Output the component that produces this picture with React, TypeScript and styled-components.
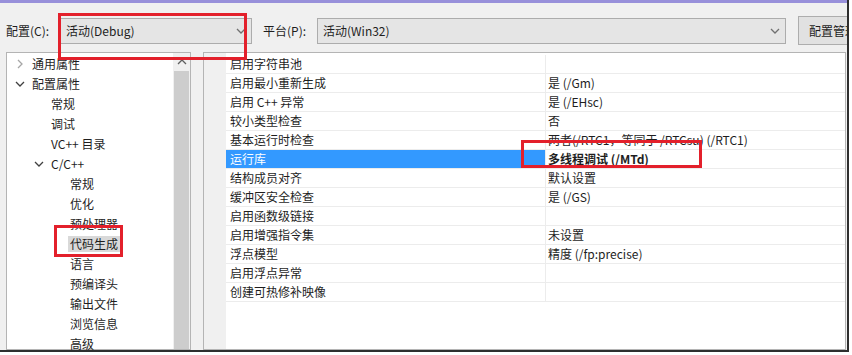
import styled, { createGlobalStyle } from "styled-components";

const GlobalStyle = createGlobalStyle`
  html, body {
    margin: 0;
    padding: 0;
    background: #fff;
  }
  body {
    font-family: "Noto Sans CJK SC", sans-serif;
    font-size: 12px;
    color: #1e1e1e;
  }
`;

type TreeItem = { label: string; level: number; arrow?: "open" | "closed"; selected?: boolean };

const treeItems: TreeItem[] = [
  { label: "通用属性", level: 0, arrow: "closed" },
  { label: "配置属性", level: 0, arrow: "open" },
  { label: "常规", level: 1 },
  { label: "调试", level: 1 },
  { label: "VC++ 目录", level: 1 },
  { label: "C/C++", level: 1, arrow: "open" },
  { label: "常规", level: 2 },
  { label: "优化", level: 2 },
  { label: "预处理器", level: 2 },
  { label: "代码生成", level: 2, selected: true },
  { label: "语言", level: 2 },
  { label: "预编译头", level: 2 },
  { label: "输出文件", level: 2 },
  { label: "浏览信息", level: 2 },
  { label: "高级", level: 2 },
];

const props: [string, string][] = [
  ["启用字符串池", ""],
  ["启用最小重新生成", "是 (/Gm)"],
  ["启用 C++ 异常", "是 (/EHsc)"],
  ["较小类型检查", "否"],
  ["基本运行时检查", "两者(/RTC1，等同于 /RTCsu) (/RTC1)"],
  ["运行库", "多线程调试 (/MTd)"],
  ["结构成员对齐", "默认设置"],
  ["缓冲区安全检查", "是 (/GS)"],
  ["启用函数级链接", ""],
  ["启用增强指令集", "未设置"],
  ["浮点模型", "精度 (/fp:precise)"],
  ["启用浮点异常", ""],
  ["创建可热修补映像", ""],
];

const Chevron = ({ dir, color }: { dir: "down" | "right" | "up"; color: string }) => {
  const pts =
    dir === "down" ? "1,3 5,7 9,3" : dir === "up" ? "1,7 5,3 9,7" : "3,1 7,5 3,9";
  return (
    <svg width="10" height="10" viewBox="0 0 10 10">
      <polyline points={pts} fill="none" stroke={color} strokeWidth="1.3" />
    </svg>
  );
};

export default function App() {
  return (
    <>
      <GlobalStyle />
      <Window>
        <TitleStrip />
        <Toolbar>
          <Label>配置(C):</Label>
          <Combo $width={192}>
            活动(Debug)
            <ComboArrow>
              <Chevron dir="down" color="#707070" />
            </ComboArrow>
          </Combo>
          <Label $gap={11}>平台(P):</Label>
          <Combo $width={469}>
            活动(Win32)
            <ComboArrow>
              <Chevron dir="down" color="#707070" />
            </ComboArrow>
          </Combo>
          <ToolButton>配置管理器(O)...</ToolButton>
        </Toolbar>

        <Body>
          <TreePanel>
            <TreeList>
              {treeItems.map((t, i) => (
                <TreeRow key={i} $level={t.level}>
                  <Arrow>
                    {t.arrow === "closed" && <Chevron dir="right" color="#a6a6a6" />}
                    {t.arrow === "open" && <Chevron dir="down" color="#404040" />}
                  </Arrow>
                  <TreeLabel $selected={t.selected}>{t.label}</TreeLabel>
                </TreeRow>
              ))}
            </TreeList>
            <ScrollBar>
              <ScrollButton>
                <Chevron dir="up" color="#606060" />
              </ScrollButton>
              <Thumb />
            </ScrollBar>
          </TreePanel>

          <GridPanel>
            <Gutter />
            <Table>
              {props.map(([name, value], i) => (
                <PropRow key={i}>
                  <NameCell $selected={i === 5}>{name}</NameCell>
                  <ValueCell $bold={i === 5}>{value}</ValueCell>
                </PropRow>
              ))}
            </Table>
          </GridPanel>
        </Body>

        <Mark $x={58} $y={13} $w={189} $h={47} />
        <Mark $x={521} $y={140} $w={181} $h={28} />
        <Mark $x={54} $y={225} $w={69} $h={32} />
      </Window>
    </>
  );
}

const Window = styled.div`
  position: relative;
  width: 847px;
  height: 350px;
  display: flex;
  flex-direction: column;
  background: #f0f0f0;
  border-right: 2px solid #2e2e2e;
  border-bottom: 2px solid #2e2e2e;
  overflow: hidden;
`;

const TitleStrip = styled.div`
  height: 3px;
  background: #9890da;
  flex-shrink: 0;
`;

const Toolbar = styled.div`
  height: 49px;
  flex-shrink: 0;
  box-sizing: border-box;
  padding: 13px 0 0 6px;
  display: flex;
  align-items: flex-start;
`;

const Label = styled.div<{ $gap?: number }>`
  flex-shrink: 0;
  width: 54px;
  margin-left: ${(p) => p.$gap ?? 0}px;
  height: 29px;
  line-height: 29px;
  white-space: nowrap;
`;

const Combo = styled.div<{ $width: number }>`
  position: relative;
  flex-shrink: 0;
  width: ${(p) => p.$width}px;
  height: 26px;
  margin-top: 2px;
  box-sizing: border-box;
  border: 1px solid #acacac;
  background: #e5e5e5;
  padding-left: 5px;
  line-height: 24px;
`;

const ComboArrow = styled.span`
  position: absolute;
  right: 5px;
  top: 7px;
  display: flex;
`;

const ToolButton = styled.div`
  margin-left: 12px;
  width: 120px;
  height: 29px;
  flex-shrink: 0;
  box-sizing: border-box;
  border: 1px solid #adadad;
  background: #e1e1e1;
  padding-left: 10px;
  line-height: 27px;
  white-space: nowrap;
`;

const Body = styled.div`
  flex: 1;
  display: flex;
  padding-left: 6px;
  min-height: 0;
`;

const TreePanel = styled.div`
  width: 185px;
  flex-shrink: 0;
  box-sizing: border-box;
  border: 1px solid #b4b4b4;
  background: #fff;
  display: flex;
  margin-right: 12px;
`;

const TreeList = styled.div`
  flex: 1;
  padding-top: 1px;
`;

const TreeRow = styled.div<{ $level: number }>`
  height: 20px;
  display: flex;
  align-items: center;
  padding-left: ${(p) => 7 + p.$level * 19}px;
  white-space: nowrap;
`;

const Arrow = styled.span`
  width: 12px;
  height: 12px;
  margin-right: 6px;
  display: flex;
  align-items: center;
  justify-content: center;
`;

const TreeLabel = styled.span<{ $selected?: boolean }>`
  line-height: 16px;
  padding: 0 2px;
  margin-left: -2px;
  background: ${(p) => (p.$selected ? "#d9d9d9" : "transparent")};
`;

const ScrollBar = styled.div`
  width: 17px;
  background: #f0f0f0;
  display: flex;
  flex-direction: column;
`;

const ScrollButton = styled.div`
  height: 18px;
  display: flex;
  align-items: center;
  justify-content: center;
`;

const Thumb = styled.div`
  flex: 1;
  margin: 0 1px;
  background: #cdcdcd;
`;

const GridPanel = styled.div`
  flex: 1;
  margin-right: 1px;
  box-sizing: border-box;
  border: 1px solid #b4b4b4;
  background: #fff;
  display: flex;
`;

const Gutter = styled.div`
  width: 22px;
  background: #f0f0f0;
`;

const Table = styled.div`
  flex: 1;
  padding-top: 2px;
`;

const PropRow = styled.div`
  display: grid;
  grid-template-columns: 319px 1fr;
  height: 19px;
  box-sizing: border-box;
  border-bottom: 1px solid #ececec;
`;

const NameCell = styled.div<{ $selected?: boolean }>`
  padding-left: 4px;
  line-height: 18px;
  white-space: nowrap;
  background: ${(p) => (p.$selected ? "#3399ff" : "transparent")};
  color: ${(p) => (p.$selected ? "#fff" : "#1e1e1e")};
`;

const ValueCell = styled.div<{ $bold?: boolean }>`
  border-left: 1px solid #ececec;
  padding-left: 2px;
  line-height: 18px;
  white-space: nowrap;
  font-weight: ${(p) => (p.$bold ? 700 : 400)};
`;

const Mark = styled.div<{ $x: number; $y: number; $w: number; $h: number }>`
  position: absolute;
  left: ${(p) => p.$x}px;
  top: ${(p) => p.$y}px;
  width: ${(p) => p.$w}px;
  height: ${(p) => p.$h}px;
  box-sizing: border-box;
  border: 3px solid #e3202b;
  pointer-events: none;
`;
